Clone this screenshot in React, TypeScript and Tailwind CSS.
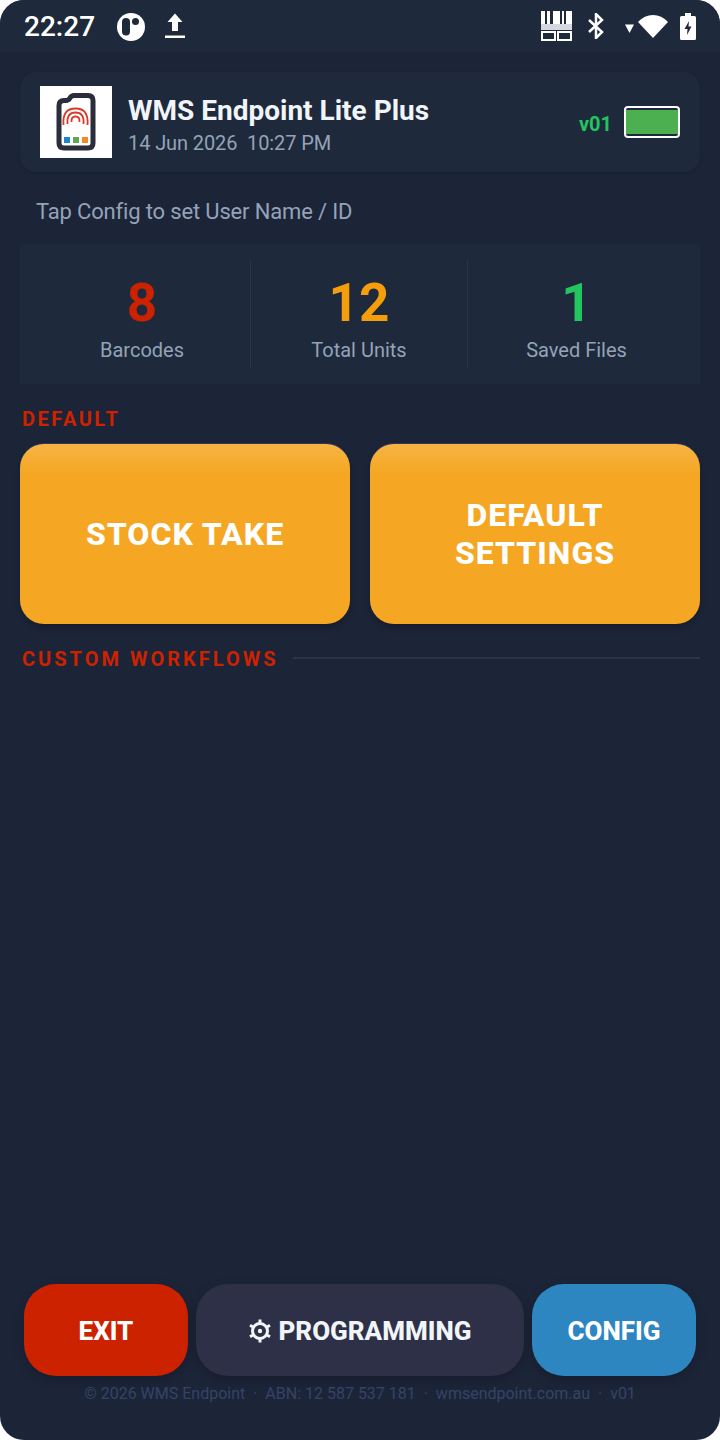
const font = { fontFamily: "Roboto, sans-serif" };

const stats = [
  { value: "8", label: "Barcodes", color: "text-[#cc2200]" },
  { value: "12", label: "Total Units", color: "text-[#f59e0b]" },
  { value: "1", label: "Saved Files", color: "text-[#22c55e]" },
];

const Logo = () => (
  <div className="w-[72px] h-[72px] bg-white shrink-0 flex items-center justify-center">
    <svg width="72" height="72" viewBox="0 0 72 72" fill="none">
      <path
        d="M24 14.500 L26 14.500 Q28.500 14.500 30 12 Q31.500 9.500 34 9.500 L48 9.500 Q53 9.500 53 14.500 L53 57 Q53 62 48 62 L24 62 Q19 62 19 57 L19 19.500 Q19 14.500 24 14.500 Z"
        stroke="#2b2d3a"
        strokeWidth="5"
        fill="#fff"
      />
      <path d="M23.500 39 Q22 22.500 35.500 22.500 Q49 22.500 47.500 39" stroke="#d8392b" strokeWidth="1.800" />
      <path d="M27.500 38 Q26.500 26.500 35.500 26.500 Q44.500 26.500 43.500 38" stroke="#d8392b" strokeWidth="1.800" />
      <path d="M31.500 36 Q31 30.500 35.500 30.500 Q40 30.500 39.500 36" stroke="#d8392b" strokeWidth="1.800" />
      <rect x="24" y="51" width="6" height="6" fill="#1f84c9" />
      <rect x="33" y="51" width="6" height="6" fill="#5fa84f" />
      <rect x="42" y="51" width="6" height="6" fill="#ef8a24" />
    </svg>
  </div>
);

const StatusLeft = () => (
  <div className="flex items-center">
    <span className="text-[28px] font-medium text-white leading-none w-[93px] ml-[24px] mt-[2px]">22:27</span>
    <svg width="28" height="28" viewBox="0 0 28 28" className="mt-[2px]">
      <circle cx="14" cy="14" r="14" fill="#fff" />
      <rect x="5" y="5" width="8" height="17.500" rx="4" fill="#1e293b" />
      <circle cx="18.500" cy="8.500" r="3.500" fill="#1e293b" />
    </svg>
    <svg width="20" height="26" viewBox="0 0 20 26" className="ml-[20px]">
      <path d="M10 0.500 L17.500 9 L13 9 L13 18 L7 18 L7 9 L2.500 9 Z" fill="#fff" />
      <rect x="0" y="22.500" width="20" height="2.500" fill="#fff" />
    </svg>
  </div>
);

const StatusRight = () => (
  <div className="flex items-center mr-[24px]">
    <svg width="31" height="30" viewBox="0 0 31 30">
      <path d="M0 0h4v13H0zM6 0h3v13H6zM12 0h7v13h-7zM21 0h2v13h-2zM25 0h6v13h-6z" fill="#fff" />
      <rect x="0" y="13" width="31" height="6" fill="#d4d8df" />
      <rect x="1" y="21" width="13" height="8" fill="none" stroke="#fff" strokeWidth="2" />
      <rect x="17" y="21" width="13" height="8" fill="none" stroke="#fff" strokeWidth="2" />
    </svg>
    <svg width="18" height="26" viewBox="0 0 18 26" fill="none" className="ml-[15px]">
      <path d="M2 7 L15 19 L9 25 L9 1 L15 7 L2 19" stroke="#fff" strokeWidth="2.500" />
    </svg>
    <svg width="9" height="9" viewBox="0 0 9 9" className="ml-[20px] mt-[4px]">
      <path d="M0 0.500 L9 0.500 L4.500 9 Z" fill="#fff" />
    </svg>
    <svg width="30" height="24" viewBox="0 0 30 24" className="ml-[4px]">
      <path d="M15 24 L0 8 Q6.500 1 15 1 Q23.500 1 30 8 Z" fill="#fff" />
    </svg>
    <svg width="16" height="27" viewBox="0 0 16 27" className="ml-[12px]">
      <path d="M5 0h6v3h3.500q1.500 0 1.500 1.500V25.500q0 1.500-1.500 1.500H1.500Q0 27 0 25.500V4.500Q0 3 1.500 3H5z" fill="#fff" />
      <path d="M9 8 L4.500 16 L7.500 16 L7 22 L11.500 13.500 L8.500 13.500 Z" fill="#1e293b" />
    </svg>
  </div>
);

const BigButton = ({ lines }: { lines: string[] }) => (
  <button className="flex-1 h-[180px] rounded-[24px] bg-[#f5a623] bg-[linear-gradient(to_bottom,#f7b443_0,#f5a623_30px)] shadow-[0_-1px_0_#2e3a52,0_4px_6px_rgba(0,0,0,0.2)] text-white font-extrabold text-[32px] leading-[38px] tracking-[1px]">
    {lines.map((line) => (
      <div key={line}>{line}</div>
    ))}
  </button>
);

const GearIcon = () => (
  <svg width="24" height="24" viewBox="0 0 24 24" fill="none" className="shrink-0">
    <circle cx="12" cy="12" r="7.500" stroke="#f1f5f9" strokeWidth="3" />
    <path
      d="M12 0.500v4M12 19.500v4M2 6.200l3.400 2M18.600 15.800l3.400 2M2 17.800l3.400-2M18.600 8.200l3.400-2"
      stroke="#f1f5f9"
      strokeWidth="3"
    />
    <circle cx="12" cy="12" r="2.200" fill="#f1f5f9" />
  </svg>
);

export default function App() {
  return (
    <div className="w-[720px] h-[1440px] bg-white" style={font}>
      <div className="w-full h-full rounded-[24px] overflow-hidden bg-[#1c2438] flex flex-col">
        <div className="h-[52px] bg-[#1e293b] flex items-center justify-between shrink-0">
          <StatusLeft />
          <StatusRight />
        </div>

        <div className="flex-1 flex flex-col px-[20px] pt-[20px]">
          <div className="h-[100px] rounded-[16px] bg-[#1e293b] flex items-center pl-[20px] pr-[20px] shadow-[0_1px_3px_rgba(0,0,0,0.15)]">
            <Logo />
            <div className="ml-[16px] flex-1 pt-[5px]">
              <div className="text-[28px] font-bold text-[#f1f5f9] leading-[32px]">WMS Endpoint Lite Plus</div>
              <div className="text-[20px] tracking-[-0.1px] text-[#94a3b8] leading-[24px] mt-[4px] whitespace-pre">14 Jun 2026  10:27 PM</div>
            </div>
            <span className="text-[#22c55e] font-bold text-[20px] mr-[12px] mt-[3px]">v01</span>
            <div className="w-[56px] h-[32px] rounded-[4px] border-2 border-white bg-[#1e293b] flex items-center">
              <div className="w-full h-[24px] bg-[#4caf50]" />
            </div>
          </div>

          <div className="h-[72px] flex items-center pl-[16px] pt-[6px] text-[22px] tracking-[-0.16px] text-[#94a3b8]">Tap Config to set User Name / ID</div>

          <div className="h-[140px] bg-[#1e293b] flex items-center px-[14px]">
            {stats.map((s, i) => (
              <div
                key={s.label}
                className={`w-[217px] h-[108px] flex flex-col items-center ${i < 2 ? "border-r border-[#2a3549]" : ""}`}
              >
                <div className={`${s.color} text-[53px] font-bold leading-[60px] mt-[13px]`}>{s.value}</div>
                <div className="text-[20px] text-[#94a3b8] leading-[24px] mt-[5px]">{s.label}</div>
              </div>
            ))}
          </div>

          <div className="h-[60px] flex items-center pl-[2px] pt-[10px] text-[#cc2200] text-[20px] font-bold tracking-[2.500px]">DEFAULT</div>

          <div className="flex gap-[20px]">
            <BigButton lines={["STOCK TAKE"]} />
            <BigButton lines={["DEFAULT", "SETTINGS"]} />
          </div>

          <div className="flex items-center h-[70px] pl-[2px]">
            <span className="text-[#cc2200] text-[20px] font-bold tracking-[3px]">CUSTOM WORKFLOWS</span>
            <div className="flex-1 h-[2px] bg-[#2a3549] ml-[14px] -mt-[2px]" />
          </div>

          <div className="flex-1" />
        </div>

        <div className="flex gap-[8px] px-[24px] shrink-0">
          <button className="w-[164px] h-[92px] rounded-[32px] bg-[#cc2200] text-white text-[26px] font-extrabold pt-[2px] shadow-[0_4px_12px_rgba(0,0,0,0.2)]">EXIT</button>
          <button className="flex-1 h-[92px] rounded-[32px] bg-[#2e3047] text-[#f1f5f9] text-[26px] font-extrabold pt-[2px] flex items-center justify-center gap-[6px] shadow-[0_4px_12px_rgba(0,0,0,0.2)]">
            <GearIcon />
            PROGRAMMING
          </button>
          <button className="w-[164px] h-[92px] rounded-[32px] bg-[#2e86c1] text-white text-[26px] font-extrabold pt-[2px] shadow-[0_4px_12px_rgba(0,0,0,0.2)]">CONFIG</button>
        </div>

        <div className="h-[64px] shrink-0 pt-[8px] text-center text-[16px] leading-[20px] text-[#334466] whitespace-pre">
          © 2026 WMS Endpoint  ·  ABN: 12 587 537 181  ·  wmsendpoint.com.au  ·  v01
        </div>
      </div>
    </div>
  );
}
